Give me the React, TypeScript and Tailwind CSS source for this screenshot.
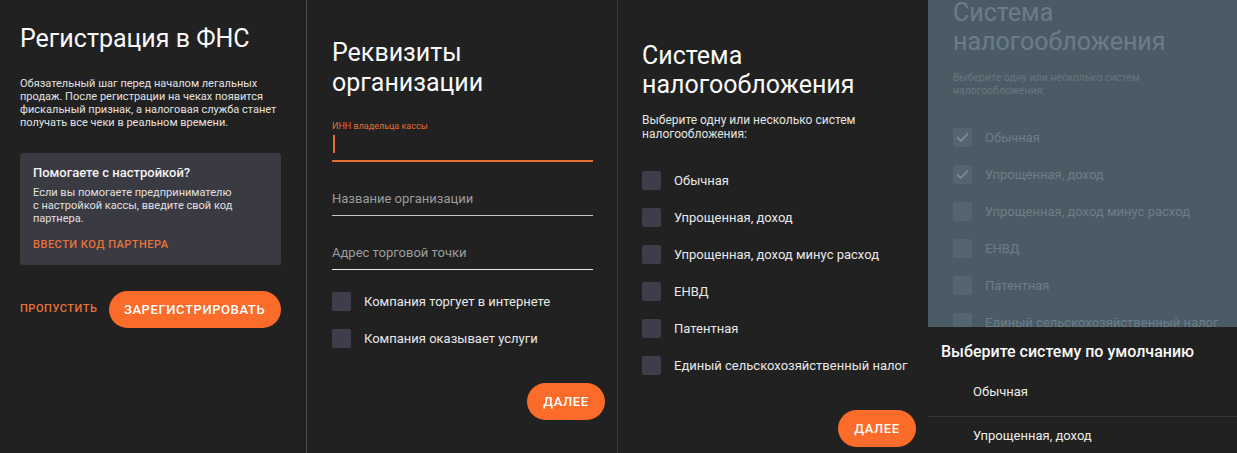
const TAX_SYSTEMS = [
  "Обычная",
  "Упрощенная, доход",
  "Упрощенная, доход минус расход",
  "ЕНВД",
  "Патентная",
  "Единый сельскохозяйственный налог",
];

function Box({ checked = false, dim = false }: { checked?: boolean; dim?: boolean }) {
  return (
    <span
      className={`flex h-[19px] w-[19px] shrink-0 items-center justify-center rounded-[2px] ${
        dim ? "bg-[#55656f]" : "bg-[#3d3d4b]"
      }`}
    >
      {checked && (
        <svg width="15" height="15" viewBox="0 0 15 15" fill="none">
          <path d="M2.5 7.8l3.3 3.3L12.6 4" stroke="#84939c" strokeWidth="1.4" strokeLinecap="round" strokeLinejoin="round" />
        </svg>
      )}
    </span>
  );
}

function PillButton({ label, className = "" }: { label: string; className?: string }) {
  return (
    <button
      className={`flex h-[37px] items-center justify-center rounded-full bg-[#fb6b29] text-[13px] font-medium tracking-[0.6px] text-white ${className}`}
    >
      {label}
    </button>
  );
}

function FnsPanel() {
  return (
    <section className="w-[307px] shrink-0 border-r border-[#505050] pl-[20px] pt-[24px]">
      <h1 className="text-[25px] leading-[30px] text-[#fafafa]">Регистрация в ФНС</h1>
      <p className="mt-[23px] whitespace-nowrap text-[11px] leading-[13px] text-[#e2e2e2]">
        Обязательный шаг перед началом легальных
        <br />
        продаж. После регистрации на чеках появится
        <br />
        фискальный признак, а налоговая служба станет
        <br />
        получать все чеки в реальном времени.
      </p>

      <div className="mt-[24px] w-[261px] rounded-[3px] bg-[#3a3a43] px-[13px] pb-[14px] pt-[12px]">
        <h2 className="text-[13px] font-medium leading-[16px] text-[#f2f2f2]">Помогаете с настройкой?</h2>
        <p className="mt-[5px] whitespace-nowrap text-[11px] leading-[13px] text-[#e0e0e0]">
          Если вы помогаете предпринимателю
          <br />
          с настройкой кассы, введите свой код
          <br />
          партнера.
        </p>
        <div className="mt-[13px] text-[11px] font-medium leading-[13px] tracking-[0.5px] text-[#e8733a]">
          ВВЕСТИ КОД ПАРТНЕРА
        </div>
      </div>

      <div className="mt-[26px] flex items-center gap-[11px]">
        <span className="text-[11px] font-medium tracking-[0.55px] text-[#e8733a]">ПРОПУСТИТЬ</span>
        <PillButton label="ЗАРЕГИСТРИРОВАТЬ" className="w-[172px]" />
      </div>
    </section>
  );
}

function DetailsPanel() {
  return (
    <section className="flex w-[311px] shrink-0 flex-col border-r border-[#353535] pl-[25px] pr-[12px] pt-[38px]">
      <h1 className="text-[25px] leading-[30px] text-[#fafafa]">
        Реквизиты
        <br />
        организации
      </h1>

      <div className="w-[261px]">
        <label className="mt-[23px] block text-[9px] leading-[11px] text-[#e46d38]">ИНН владельца кассы</label>
        <div className="h-[28px] pt-[3px]">
          <div className="ml-[1px] h-[18px] w-[1.5px] bg-[#e46d38]" />
        </div>
        <div className="h-[2px] bg-[#e46d38]" />

        <div className="mt-[29px] text-[13px] leading-[16px] text-[#9c9c9c]">Название организации</div>
        <div className="mt-[8px] h-px bg-[#c4c4c4]" />

        <div className="mt-[29px] text-[13px] leading-[16px] text-[#9c9c9c]">Адрес торговой точки</div>
        <div className="mt-[8px] h-px bg-[#ececec]" />

        <div className="mt-[22px] flex flex-col gap-[18px]">
          {["Компания торгует в интернете", "Компания оказывает услуги"].map((item) => (
            <div key={item} className="flex h-[19px] items-center gap-[13px]">
              <Box />
              <span className="text-[13px] text-[#e8e8e8]">{item}</span>
            </div>
          ))}
        </div>
      </div>

      <PillButton label="ДАЛЕЕ" className="mt-[35px] w-[78px] self-end" />
    </section>
  );
}

function TaxPanel() {
  return (
    <section className="flex w-[310px] shrink-0 flex-col pl-[24px] pr-[12px] pt-[41px]">
      <h1 className="text-[25px] leading-[29px] text-[#fafafa]">
        Система
        <br />
        налогообложения
      </h1>
      <p className="mt-[14px] text-[12px] leading-[14px] text-[#e4e4e4]">
        Выберите одну или несколько систем
        <br />
        налогообложения:
      </p>
      <div className="mt-[30px] flex flex-col gap-[18px]">
        {TAX_SYSTEMS.map((item) => (
          <div key={item} className="flex h-[19px] items-center gap-[13px]">
            <Box />
            <span className="text-[13px] text-[#e8e8e8]">{item}</span>
          </div>
        ))}
      </div>
      <PillButton label="ДАЛЕЕ" className="mt-[35px] w-[78px] self-end" />
    </section>
  );
}

function DefaultTaxPanel() {
  return (
    <section className="flex min-w-0 flex-1 flex-col">
      {/* dimmed screen behind the bottom sheet */}
      <div className="flex-1 overflow-hidden bg-[#4b5b66] pl-[25px]">
        <h1 className="-mt-[2px] text-[25px] leading-[29px] text-[#6c7c87]">
          Система
          <br />
          налогообложения
        </h1>
        <p className="mt-[15px] text-[10.5px] leading-[13px] text-[#66767f]">
          Выберите одну или несколько систем
          <br />
          налогообложения:
        </p>
        <div className="mt-[31px] flex flex-col gap-[18px]">
          {TAX_SYSTEMS.map((item, i) => (
            <div key={item} className="flex h-[19px] items-center gap-[13px]">
              <Box dim checked={i < 2} />
              <span className="whitespace-nowrap text-[13px] text-[#6d7d88]">{item}</span>
            </div>
          ))}
        </div>
      </div>

      {/* bottom sheet */}
      <div className="h-[126px] shrink-0 bg-[#212121]">
        <h2 className="pl-[13px] pt-[15px] text-[16px] font-medium leading-[20px] text-[#fafafa]">
          Выберите систему по умолчанию
        </h2>
        <div className="border-b border-[#333333] pb-[16px] pl-[45px] pt-[22px] text-[13px] leading-[16px] text-[#ececec]">
          Обычная
        </div>
        <div className="pl-[45px] pt-[11px] text-[13px] leading-[16px] text-[#ececec]">Упрощенная, доход</div>
      </div>
    </section>
  );
}

export default function App() {
  return (
    <div className="flex h-[453px] w-[1237px] overflow-hidden bg-[#212121] font-['Roboto',sans-serif] text-white">
      <FnsPanel />
      <DetailsPanel />
      <TaxPanel />
      <DefaultTaxPanel />
    </div>
  );
}
